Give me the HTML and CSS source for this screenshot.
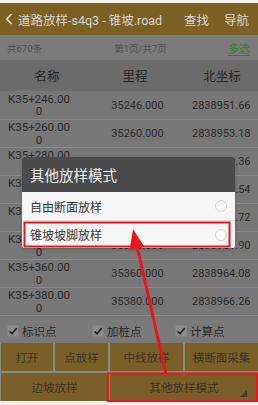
FILE: index.html
```html
<!DOCTYPE html>
<html lang="zh">
<head>
<meta charset="utf-8">
<title>道路放样</title>
<link rel="stylesheet" href="styles.css">
</head>
<body>
<div class="screen">
  <div class="status"></div>
  <header class="appbar">
    <svg class="back" width="8" height="12" viewBox="0 0 8 12"><path d="M6.5 1 L1.8 6 L6.5 11" fill="none" stroke="#d6d6d6" stroke-width="1.8"/></svg>
    <span class="title">道路放样-s4q3 - 锥坡.road</span>
    <span class="action a1">查找</span>
    <span class="action">导航</span>
  </header>
  <div class="subbar">
    <span class="count">共670条</span>
    <span class="page">第1页/共7页</span>
    <span class="multi">多选</span>
  </div>
  <div class="thead">
    <span>名称</span>
    <span>里程</span>
    <span class="c3">北坐标</span>
  </div>
  <div class="tbody">
    <div class="row"><span class="name">K35+246.000</span><span class="mile">35246.000</span><span class="north">2838951.660</span></div>
    <div class="row"><span class="name">K35+260.000</span><span class="mile">35260.000</span><span class="north">2838953.180</span></div>
    <div class="row"><span class="name">K35+280.000</span><span class="mile">35280.000</span><span class="north">2838955.367</span></div>
    <div class="row"><span class="name">K35+300.000</span><span class="mile">35300.000</span><span class="north">2838957.547</span></div>
    <div class="row"><span class="name">K35+320.000</span><span class="mile">35320.000</span><span class="north">2838959.727</span></div>
    <div class="row"><span class="name">K35+340.000</span><span class="mile">35340.000</span><span class="north">2838961.907</span></div>
    <div class="row"><span class="name">K35+360.000</span><span class="mile">35360.000</span><span class="north">2838964.088</span></div>
    <div class="row"><span class="name">K35+380.000</span><span class="mile">35380.000</span><span class="north">2838966.265</span></div>
    <div class="row"><span class="name">K35+400.000</span><span class="mile">35400.000</span><span class="north">2838968.445</span></div>
  </div>
  <div class="checks">
    <label class="chk"><svg width="12" height="12" viewBox="0 0 12 12"><rect x="0.5" y="0.5" width="11" height="11" rx="1" fill="#8c8c8c"/><path d="M2.5 6.2 L5 8.8 L9.8 3" fill="none" stroke="#1e1e1e" stroke-width="1.6"/></svg>标识点</label>
    <label class="chk"><svg width="12" height="12" viewBox="0 0 12 12"><rect x="0.5" y="0.5" width="11" height="11" rx="1" fill="#8c8c8c"/><path d="M2.5 6.2 L5 8.8 L9.8 3" fill="none" stroke="#1e1e1e" stroke-width="1.6"/></svg>加桩点</label>
    <label class="chk"><svg width="12" height="12" viewBox="0 0 12 12"><rect x="0.5" y="0.5" width="11" height="11" rx="1" fill="#8c8c8c"/><path d="M2.5 6.2 L5 8.8 L9.8 3" fill="none" stroke="#1e1e1e" stroke-width="1.6"/></svg>计算点</label>
  </div>
  <div class="buttons">
    <div class="btn">打开</div>
    <div class="btn">点放样</div>
    <div class="btn">中线放样</div>
    <div class="btn">横断面采集</div>
    <div class="btn wide">边坡放样</div>
    <div class="btn wide more">其他放样模式<span class="corner"></span></div>
  </div>
  <div class="navstrip"></div>

  <div class="dialog">
    <div class="dtitle">其他放样模式</div>
    <div class="ditem"><span>自由断面放样</span><span class="radio"></span></div>
    <div class="ditem"><span>锥坡坡脚放样</span><span class="radio"></span></div>
  </div>

  <svg class="annot" width="258" height="405" viewBox="0 0 258 405">
    <rect x="24.5" y="222.5" width="205" height="24" fill="none" stroke="#e8161c" stroke-width="2"/>
    <rect x="108" y="373.5" width="149" height="27.5" fill="none" stroke="#e8161c" stroke-width="2"/>
    <line x1="166" y1="374" x2="137" y2="246" stroke="#e8161c" stroke-width="3"/>
    <polygon points="133,229 144.5,247 129.5,250.5" fill="#e8161c"/>
  </svg>
</div>
</body>
</html>
```

FILE: styles.css
```css
* { box-sizing: border-box; }
html, body { margin: 0; padding: 0; }
body {
  font-family: Roboto, "Noto Sans CJK SC", sans-serif;
  background: #f2f2f2;
}
.screen {
  position: relative;
  width: 258px;
  height: 405px;
  overflow: hidden;
  display: flex;
  flex-direction: column;
  background: #777777;
}
.status { height: 3px; background: #f4f4f0; flex: none; }
.appbar {
  height: 32px;
  flex: none;
  background: #7c5f23;
  display: flex;
  align-items: center;
  padding-left: 5px;
  color: #d8d8d8;
  font-size: 12.5px;
}
.back { margin-right: 5px; }
.title { flex: 1; white-space: nowrap; }
.action { margin-right: 9px; }
.a1 { margin-right: 15px; }
.subbar {
  height: 25px;
  flex: none;
  background: #7b7b7b;
  display: grid;
  grid-template-columns: 1fr auto 1fr;
  align-items: center;
  padding: 0 8px 0 7px;
  font-size: 9.5px;
  color: #4f4f4f;
}
.page { transform: translateX(12px); }
.multi {
  justify-self: end;
  color: #3b7a2c;
  font-size: 11px;
  text-decoration: underline;
  text-underline-offset: 2px;
}
.thead {
  height: 31px;
  flex: none;
  background: #6b6b6b;
  display: grid;
  grid-template-columns: 94px 82px 1fr;
  align-items: center;
  text-align: center;
  font-size: 12.5px;
  color: #262626;
}
.thead .c3 { padding-left: 10px; }
.tbody { flex: 1 1 auto; min-height: 0; overflow: hidden; }
.row {
  height: 28px;
  display: grid;
  grid-template-columns: 66px 108px 70px;
  align-items: center;
  padding: 0 8px 0 6px;
  border-top: 1px solid #8a8a8a;
  color: #2a2a2a;
}
.row:first-child { border-top: none; }
.name {
  font-size: 11.5px;
  line-height: 12.5px;
  text-align: center;
  word-break: break-all;
}
.mile {
  font-size: 11px;
  padding-left: 23px;
  text-align: center;
}
.north {
  font-size: 11px;
  padding-left: 12px;
  white-space: nowrap;
  overflow: hidden;
}
.checks {
  height: 25px;
  flex: none;
  background: #7a7a7a;
  display: grid;
  grid-template-columns: 85px 83px 1fr;
  align-items: center;
  padding-left: 7px;
  font-size: 11.5px;
  color: #262626;
}
.chk { display: flex; align-items: center; gap: 3px; }
.buttons {
  height: 58px;
  flex: none;
  display: grid;
  grid-template-columns: 52px 53px 73px 1fr;
  grid-template-rows: 1fr 1fr;
  gap: 2px;
  padding-left: 1px;
  background: #8a8a84;
}
.btn {
  position: relative;
  background: #7b5f29;
  display: flex;
  align-items: center;
  justify-content: center;
  font-size: 11.5px;
  color: #3b3424;
}
.wide { grid-column: span 2; }
.corner {
  position: absolute;
  right: 11px;
  bottom: 4px;
  width: 0;
  height: 0;
  border-left: 7px solid transparent;
  border-bottom: 7px solid #3c3c36;
}
.navstrip { flex: none; height: 4px; background: #f2f2ee; }
.dialog {
  position: absolute;
  left: 22px;
  top: 157px;
  width: 213px;
  background: #f6f6f6;
  border-radius: 2px;
  overflow: hidden;
  box-shadow: 0 1px 3px rgba(0,0,0,0.25);
}
.dtitle {
  height: 35px;
  background: #4b4b4b;
  color: #ececec;
  font-size: 14.5px;
  display: flex;
  align-items: center;
  padding-left: 8px;
}
.ditem {
  height: 28px;
  display: flex;
  align-items: center;
  justify-content: space-between;
  padding: 0 8px;
  font-size: 12px;
  color: #333333;
}
.ditem + .ditem { border-top: 1px solid #e4e4e4; }
.radio {
  width: 12px;
  height: 12px;
  border-radius: 50%;
  border: 1px solid #d0d0d0;
  background: #fafafa;
}
.annot { position: absolute; left: 0; top: 0; pointer-events: none; }
```
